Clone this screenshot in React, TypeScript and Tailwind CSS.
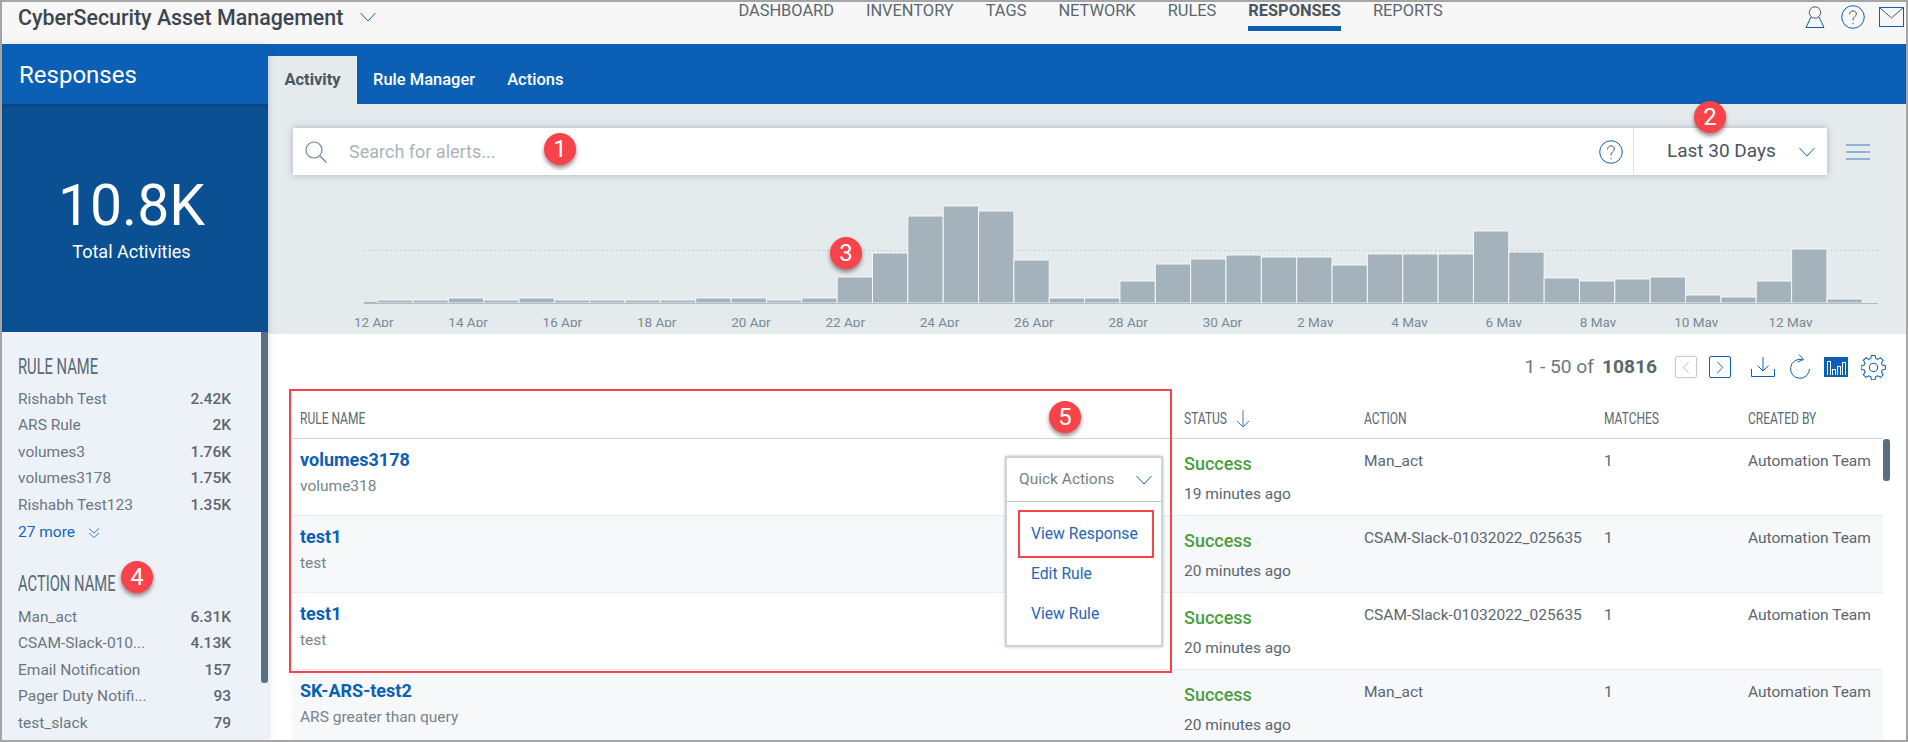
const navItems = ['DASHBOARD', 'INVENTORY', 'TAGS', 'NETWORK', 'RULES', 'RESPONSES', 'REPORTS'];

const barHeights = [
  3, 3, 5, 3, 5, 3, 3, 3, 3, 5, 5, 3, 5, 26, 50, 87, 97, 92, 43, 5, 5,
  22, 39, 44, 48, 46, 46, 38, 49, 49, 49, 72, 51, 25, 22, 24, 26, 8, 6, 22, 54, 4,
];

const dateLabels = [
  '12 Apr', '14 Apr', '16 Apr', '18 Apr', '20 Apr', '22 Apr', '24 Apr', '26 Apr',
  '28 Apr', '30 Apr', '2 May', '4 May', '6 May', '8 May', '10 May', '12 May',
];

const ruleFacets = [
  ['Rishabh Test', '2.42K'],
  ['ARS Rule', '2K'],
  ['volumes3', '1.76K'],
  ['volumes3178', '1.75K'],
  ['Rishabh Test123', '1.35K'],
];

const actionFacets = [
  ['Man_act', '6.31K'],
  ['CSAM-Slack-010...', '4.13K'],
  ['Email Notification', '157'],
  ['Pager Duty Notifi...', '93'],
  ['test_slack', '79'],
];

const rows = [
  { name: 'volumes3178', sub: 'volume318', time: '19 minutes ago', action: 'Man_act' },
  { name: 'test1', sub: 'test', time: '20 minutes ago', action: 'CSAM-Slack-01032022_025635' },
  { name: 'test1', sub: 'test', time: '20 minutes ago', action: 'CSAM-Slack-01032022_025635' },
  { name: 'SK-ARS-test2', sub: 'ARS greater than query', time: '20 minutes ago', action: 'Man_act' },
];

function Chevron({ className }: { className: string }) {
  return (
    <svg viewBox="0 0 16 10" fill="none" stroke="#0b5fb4" strokeWidth="1" className={className}>
      <path d="M.5 1l7.5 8 7.5-8" />
    </svg>
  );
}

function HelpIcon({ className }: { className: string }) {
  return (
    <svg viewBox="0 0 24 24" fill="none" stroke="#0b5fb4" strokeWidth="1" className={className}>
      <circle cx="12" cy="12" r="11.3" />
      <path d="M8.6 9.2c0-2 1.5-3.3 3.4-3.3s3.4 1.3 3.4 3.1c0 2.6-3.4 2.8-3.4 5.6v1" stroke="#4a5560" />
      <path d="M12 17.8v1.4" stroke="#4a5560" />
    </svg>
  );
}

function Badge({ n, className }: { n: number; className: string }) {
  return (
    <div
      className={`absolute z-30 flex h-[32px] w-[32px] items-center justify-center rounded-full bg-[#f8434a] text-[24px] leading-none text-white shadow-[0_3px_4px_rgba(60,20,20,0.5)] ${className}`}
    >
      {n}
    </div>
  );
}

// condensed caps, the page's heading face is not installed
function Caps({ children, className = 'scale-x-[0.75]' }: { children: string; className?: string }) {
  return <span className={`inline-block origin-left whitespace-nowrap ${className}`}>{children}</span>;
}

function Facet({ title, items, listClass }: { title: string; items: string[][]; listClass: string }) {
  return (
    <div>
      <div className="h-[24px] text-[22px] leading-[24px] text-[#5a6872]">
        <Caps className="scale-x-[0.67]">{title}</Caps>
      </div>
      <div className={listClass}>
        {items.map(([label, value]) => (
          <div key={label} className="flex h-[26.5px] w-[213px] items-center justify-between text-[15.5px] text-[#6a7780]">
            <span>{label}</span>
            <span className="font-medium text-[#5b6770]">{value}</span>
          </div>
        ))}
      </div>
    </div>
  );
}

function Sidebar() {
  return (
    <aside className="relative z-10 flex w-[266px] shrink-0 flex-col shadow-[2px_0_5px_rgba(60,80,100,0.15)]">
      <div className="flex h-[60px] items-center bg-[#0b5fb4] pl-[17px] pt-[1px] text-[24px] text-white">Responses</div>
      <div className="flex h-[228px] flex-col items-center bg-[#0a5093] pr-[7px] pt-[67px] text-white shadow-[inset_0_2px_3px_rgba(0,30,60,0.25)]">
        <div className="text-[57px] font-normal leading-[70px]">10.8K</div>
        <div className="text-[18px] leading-[22px]">Total Activities</div>
      </div>
      <div className="relative flex-1 overflow-hidden bg-[#edf2f9] pl-[16px] pt-[23px]">
        <Facet title="RULE NAME" items={ruleFacets} listClass="mt-[7px]" />
        <div className="mt-[1px] flex h-[26.5px] items-center gap-[13px] text-[15.5px] text-[#1565c0]">
          27 more
          <svg viewBox="0 0 12 12" fill="none" stroke="#3d7fc4" strokeWidth="1" className="h-[12px] w-[12px]">
            <path d="M1 1.5l5 4.5 5-4.5M1 6l5 4.5 5-4.5" />
          </svg>
        </div>
        <div className="mt-[26px]">
          <Facet title="ACTION NAME" items={actionFacets} listClass="mt-[8px]" />
        </div>
        <div className="absolute right-0 top-0 h-[351px] w-[7px] rounded-b-[3px] bg-[#5a7080]" />
      </div>
    </aside>
  );
}

function Chart() {
  return (
    <svg viewBox="0 0 1514 104" width="1514" height="104" className="ml-[96px] mt-[25px] block">
      <line x1="0" x2="1514" y1="50.5" y2="50.5" stroke="#b9c4cb" strokeWidth="1" strokeDasharray="1.5 3" />
      <rect x="0" y="102" width="14" height="1" fill="#a3b2bb" />
      {barHeights.map((h, i) => (
        <rect
          key={i}
          x={13.6 + i * 35.35}
          y={103 - h}
          width={35.35}
          height={h}
          fill="#a3b2bb"
          stroke="#f4f7f8"
          strokeWidth="1"
        />
      ))}
      <line x1="0" x2="1514" y1="103.5" y2="103.5" stroke="#b0bcc4" strokeWidth="1" />
    </svg>
  );
}

function ActivityPanel() {
  return (
    <div className="h-[230px] shrink-0 bg-[#e5eaed]">
      <div className="flex items-center pl-[25px] pt-[24px]">
        <div className="flex h-[47px] w-[1534px] items-center bg-white shadow-[0_0_7px_rgba(90,110,125,0.45)]">
          <svg viewBox="0 0 22 22" fill="none" stroke="#5f7f99" strokeWidth="1.1" className="ml-[12px] h-[22px] w-[22px]">
            <circle cx="9" cy="9" r="8" />
            <path d="M15 15l6.5 6.5" />
          </svg>
          <span className="ml-[22px] text-[18px] text-[#a9b4bb]">Search for alerts...</span>
          <HelpIcon className="ml-auto h-[24px] w-[24px]" />
          <div className="ml-[10px] flex h-full w-[194px] items-center border-l border-[#e0e5e8] pl-[33px]">
            <span className="text-[19px] text-[#4a5560]">Last 30 Days</span>
            <Chevron className="ml-[23px] h-[10px] w-[16px]" />
          </div>
        </div>
        <svg viewBox="0 0 24 16" fill="none" stroke="#3f78b8" strokeWidth="1.2" className="ml-[19px] h-[16px] w-[24px]">
          <path d="M0 1h24M0 8h24M0 15h24" />
        </svg>
      </div>
      <Chart />
      <div className="ml-[86px] mt-[11px] flex h-[12px] overflow-hidden">
        {dateLabels.map((d) => (
          <span key={d} className="w-[94.3px] shrink-0 text-[13.5px] leading-[14px] text-[#7a8a94]">
            {d}
          </span>
        ))}
      </div>
    </div>
  );
}

function Toolbar() {
  return (
    <div className="flex h-[66px] shrink-0 items-center justify-end pr-[20px]">
      <span className="text-[19.2px] text-[#6a7780]">1 - 50 of</span>
      <span className="ml-[8px] text-[19.2px] font-bold text-[#5b6770]">10816</span>
      <div className="ml-[18px] flex h-[22px] w-[22px] items-center justify-center rounded-[2px] border border-[#c5ced4] shadow-[0_0_2px_rgba(0,0,0,0.15)]">
        <svg viewBox="0 0 8 14" fill="none" stroke="#a9b4bb" className="h-[13px] w-[8px]"><path d="M7 1L1 7l6 6" /></svg>
      </div>
      <div className="ml-[12px] flex h-[22px] w-[22px] items-center justify-center rounded-[2px] border border-[#0b5fb4]">
        <svg viewBox="0 0 8 14" fill="none" stroke="#0b5fb4" className="h-[13px] w-[8px]"><path d="M1 1l6 6-6 6" /></svg>
      </div>
      <svg viewBox="0 0 24 20" fill="none" stroke="#0b5fb4" strokeWidth="1" className="ml-[20px] h-[20px] w-[24px]">
        <path d="M12 0v14M6.5 8.5L12 14l5.5-5.5M.5 12v7.5h23V12" />
      </svg>
      <svg viewBox="0 0 22 26" fill="none" stroke="#0b5fb4" strokeWidth="1" className="ml-[14px] h-[26px] w-[22px]">
        <path d="M13 5.5A9.5 9.5 0 1 0 20.5 15" />
        <path d="M10 .5l4.5 5-6 2.5" />
      </svg>
      <div className="ml-[13px] flex h-[20px] w-[24px] items-end justify-center gap-[1px] bg-[#0b5fb4] px-[2px] pb-[2px]">
        <span className="h-[14px] w-[4px] border border-white border-b-0" />
        <span className="h-[6px] w-[4px] border border-white border-b-0" />
        <span className="h-[9px] w-[4px] border border-white border-b-0" />
        <span className="h-[13px] w-[4px] border border-white border-b-0" />
      </div>
      <svg viewBox="0 0 24 24" fill="none" stroke="#0b5fb4" strokeWidth="1" className="ml-[13px] h-[25px] w-[25px]">
        <path d="M10.2 1h3.6l.6 3 2.1.9 2.6-1.7 2.6 2.6-1.7 2.6.9 2.1 3 .6v3.6l-3 .6-.9 2.1 1.7 2.6-2.6 2.6-2.6-1.7-2.1.9-.6 3h-3.6l-.6-3-2.1-.9-2.6 1.7-2.6-2.6 1.7-2.6-.9-2.1-3-.6v-3.6l3-.6.9-2.1-1.7-2.6 2.6-2.6 2.6 1.7 2.1-.9z" transform="translate(0 -.6) scale(.98)" />
        <circle cx="12" cy="12" r="4" />
      </svg>
    </div>
  );
}

const columns = 'grid grid-cols-[892px_180px_240px_144px_135px]';

function ResultsTable() {
  return (
    <div className="ml-[24px] w-[1591px]">
      <div className={`${columns} h-[39px] items-center border-b border-[#cdd5da] text-[16px] text-[#5a6872]`}>
        <span className="pl-2"><Caps>RULE NAME</Caps></span>
        <span className="flex items-center">
          <Caps>STATUS</Caps>
          <svg viewBox="0 0 14 18" fill="none" stroke="#3f78b8" strokeWidth="1" className="-ml-[5px] h-[18px] w-[14px]">
            <path d="M7 0v17M1 11l6 6 6-6" />
          </svg>
        </span>
        <span><Caps>ACTION</Caps></span>
        <span><Caps>MATCHES</Caps></span>
        <span><Caps>CREATED BY</Caps></span>
      </div>
      {rows.map((r, i) => (
        <div
          key={i}
          className={`${columns} h-[77px] border-b border-[#e8ecef] text-[15.5px] text-[#5a6670] ${i % 2 === 1 ? 'bg-[#f6f8fa]' : 'bg-white'}`}
        >
          <div className="pl-2 pt-[10px]">
            <div className="text-[18px] font-bold leading-[22px] text-[#0b5fb4]">{r.name}</div>
            <div className="mt-[5px] leading-[20px] text-[#76838c]">{r.sub}</div>
          </div>
          <div className="pt-[14px]">
            <div className="text-[18px] font-medium leading-[22px] text-[#4a9e3f]">Success</div>
            <div className="mt-[9px] leading-[20px]">{r.time}</div>
          </div>
          <div className="pt-[12px] leading-[20px]">{r.action}</div>
          <div className="pt-[12px] leading-[20px]">1</div>
          <div className="pt-[12px] leading-[20px]">Automation Team</div>
        </div>
      ))}
    </div>
  );
}

function QuickActions() {
  return (
    <div className="absolute left-[1003px] top-[454px] z-20 h-[191px] w-[158px] border-2 border-[#ccd4da] bg-white shadow-[0_0_3px_rgba(90,110,125,0.4)]">
      <div className="flex h-[44px] items-center justify-between border-b border-[#b9c4cb] pl-[12px] pr-[9px] pt-[1px] text-[15.5px] text-[#73818c]">
        Quick Actions
        <Chevron className="h-[10px] w-[16px]" />
      </div>
      <div className="pl-[24px] pt-[12px] text-[15.7px] text-[#1e66b8]">
        <div className="flex h-[40px] items-center">View Response</div>
        <div className="flex h-[40px] items-center">Edit Rule</div>
        <div className="flex h-[40px] items-center">View Rule</div>
      </div>
    </div>
  );
}

export default function App() {
  return (
    <div className="relative flex h-[742px] w-[1908px] flex-col overflow-hidden border-2 border-[#a5a5a5] bg-white font-['Roboto',sans-serif]">
      <header className="flex h-[42px] shrink-0 items-start bg-[#f7f7f7]">
        <span className="ml-[16px] mt-[2px] text-[21.4px] font-medium leading-[28px] text-[#3d4650]">CyberSecurity Asset Management</span>
        <Chevron className="ml-[17px] mt-[10px] h-[10px] w-[16px]" />
        <nav className="ml-[362px] flex gap-[32px] text-[16.4px] text-[#5a6670]">
          {navItems.map((item) => (
            <div
              key={item}
              className={
                item === 'RESPONSES'
                  ? 'h-[29px] border-b-[5px] border-[#0b5fb4] font-bold leading-[18px] text-[#4a5560]'
                  : 'h-[29px] leading-[18px]'
              }
            >
              {item}
            </div>
          ))}
        </nav>
        <div className="ml-auto mr-[2px] mt-[3px] flex items-center gap-[16px]">
          <svg viewBox="0 0 20 22" fill="none" stroke="#0b5fb4" strokeWidth="1" className="h-[22px] w-[20px]">
            <circle cx="10" cy="6.5" r="5.7" stroke="#4a5560" />
            <path d="M6 11L1 21.5h18L14 11" />
          </svg>
          <HelpIcon className="h-[24px] w-[24px]" />
          <svg viewBox="0 0 25 20" fill="none" stroke="#0b5fb4" strokeWidth="1" className="-ml-[2px] h-[20px] w-[25px]">
            <rect x=".5" y=".5" width="24" height="19" />
            <path d="M.5 .5L12.5 11 24.5 .5" stroke="#4a5560" />
          </svg>
        </div>
      </header>
      <div className="flex min-h-0 flex-1">
        <Sidebar />
        <main className="flex min-w-0 flex-1 flex-col">
          <div className="flex h-[60px] shrink-0 items-end bg-[#0b5fb4] text-[16.5px] font-medium text-white">
            <div className="flex h-[48px] w-[89px] items-center justify-center bg-[#e5eaed] font-bold text-[#4a5560]">Activity</div>
            <div className="flex h-[48px] items-center px-4">Rule Manager</div>
            <div className="flex h-[48px] items-center px-4">Actions</div>
          </div>
          <ActivityPanel />
          <Toolbar />
          <ResultsTable />
        </main>
      </div>

      <div className="absolute left-[287px] top-[387px] z-10 h-[284px] w-[883px] border-2 border-[#f8434a]" />
      <div className="absolute right-[16px] top-[437px] z-10 h-[42px] w-[7px] rounded-[3px] bg-[#5a7080]" />
      <QuickActions />
      <div className="absolute left-[1016px] top-[508px] z-30 h-[48px] w-[136px] border-2 border-[#f8434a]" />
      <Badge n={1} className="left-[542px] top-[131px]" />
      <Badge n={2} className="left-[1692px] top-[99px]" />
      <Badge n={3} className="left-[828px] top-[235px]" />
      <Badge n={4} className="left-[119px] top-[559px]" />
      <Badge n={5} className="left-[1047px] top-[399px]" />
    </div>
  );
}
